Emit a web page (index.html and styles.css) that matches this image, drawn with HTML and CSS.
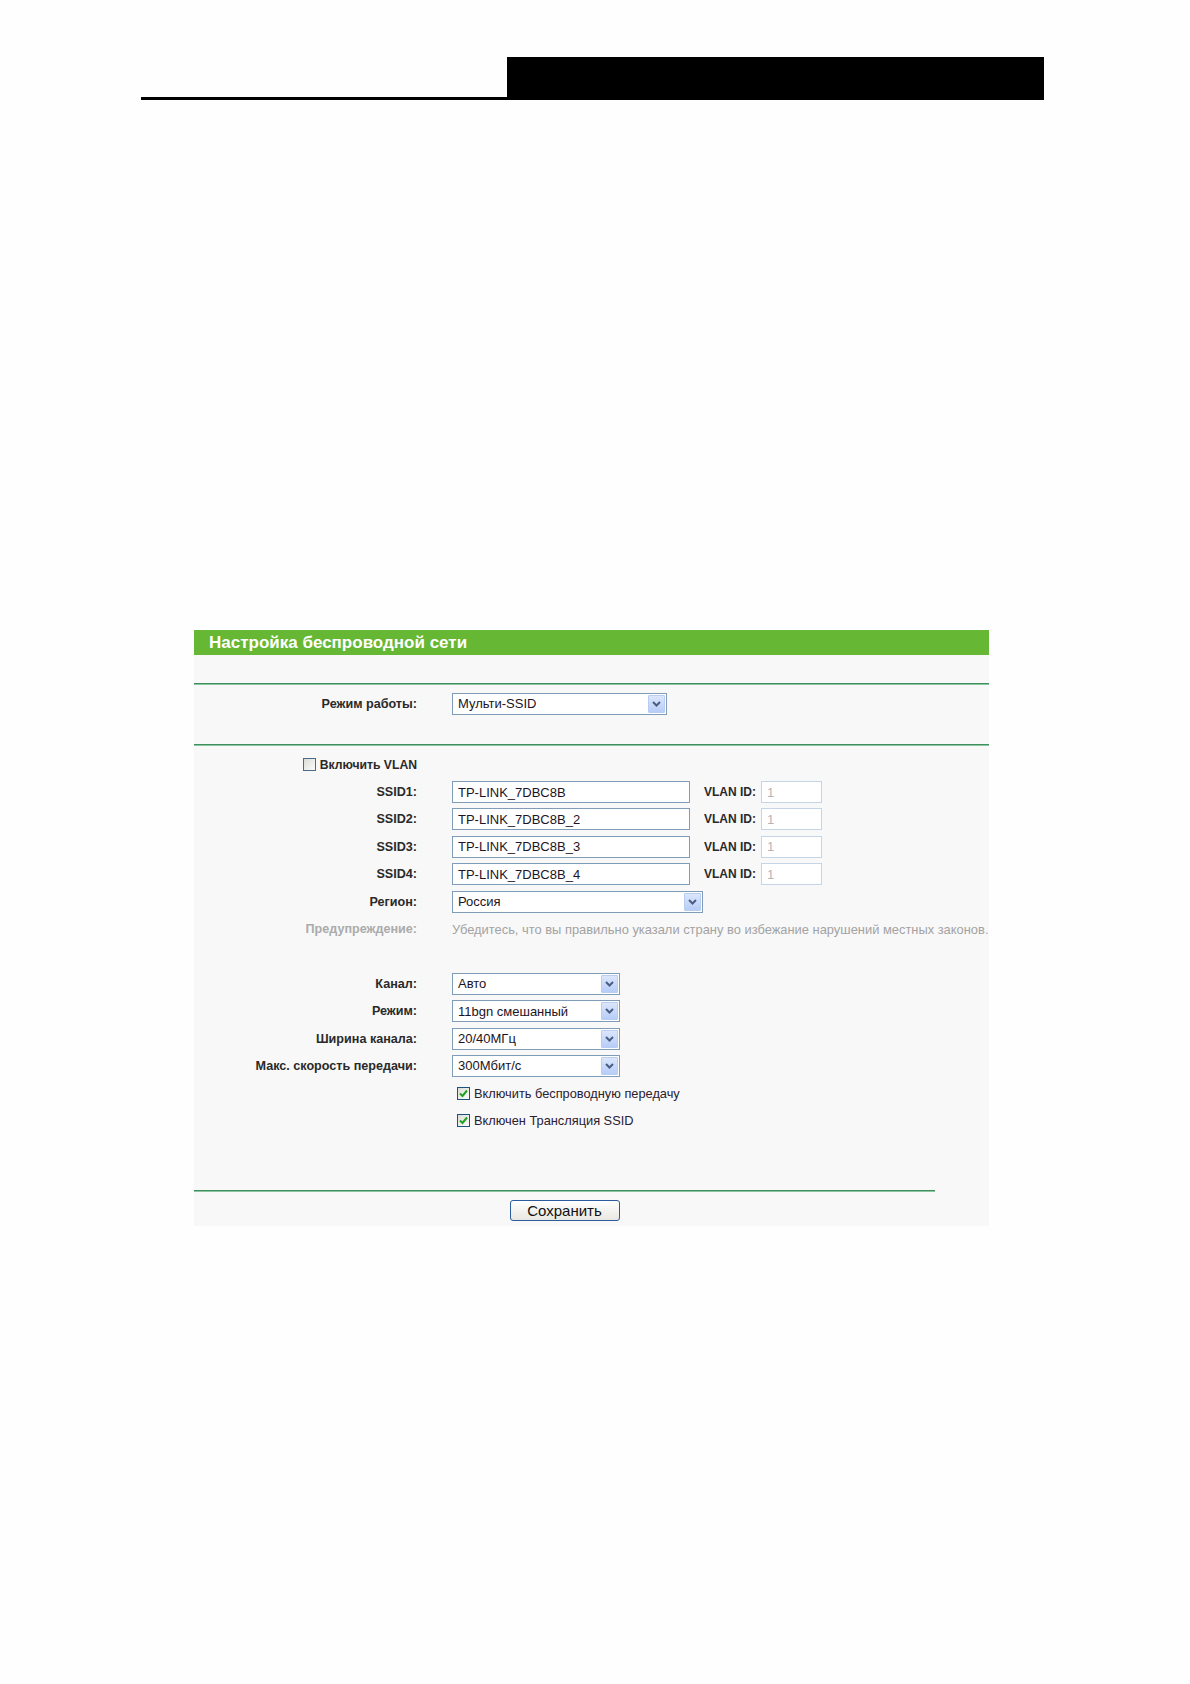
FILE: index.html
```html
<!DOCTYPE html>
<html lang="ru">
<head>
  <meta charset="UTF-8">
  <title>Настройка беспроводной сети</title>
  <link rel="stylesheet" href="styles.css">
</head>
<body>
  <div class="page">
    <div class="header">
      <div class="rule"></div>
      <div class="bar"></div>
    </div>

    <div class="panel">
      <div class="title">Настройка беспроводной сети</div>
      <div class="spacer"></div>
      <div class="divider"></div>

      <!-- Режим работы -->
      <div class="section mode">
        <div class="row">
          <div class="label">Режим работы:</div>
          <div class="field">
            <div class="select w-mode">
              <span>Мульти-SSID</span>
              <span class="arrow"><svg width="9" height="6" viewBox="0 0 9 6"><polyline points="1,1 4.5,4.5 8,1" fill="none" stroke="#4b5d84" stroke-width="2"/></svg></span>
            </div>
          </div>
        </div>
      </div>
      <div class="divider"></div>

      <div class="section main">
        <div class="row">
          <div class="label vlan-toggle">
            <span class="check"></span>Включить VLAN
          </div>
          <div class="field"></div>
        </div>

        <div class="row">
          <div class="label">SSID1:</div>
          <div class="field">
            <input class="text w-ssid" type="text" value="TP-LINK_7DBC8B">
            <span class="vlan-label">VLAN ID:</span>
            <input class="text w-vlan" type="text" value="1" disabled>
          </div>
        </div>
        <div class="row">
          <div class="label">SSID2:</div>
          <div class="field">
            <input class="text w-ssid" type="text" value="TP-LINK_7DBC8B_2">
            <span class="vlan-label">VLAN ID:</span>
            <input class="text w-vlan" type="text" value="1" disabled>
          </div>
        </div>
        <div class="row">
          <div class="label">SSID3:</div>
          <div class="field">
            <input class="text w-ssid" type="text" value="TP-LINK_7DBC8B_3">
            <span class="vlan-label">VLAN ID:</span>
            <input class="text w-vlan" type="text" value="1" disabled>
          </div>
        </div>
        <div class="row">
          <div class="label">SSID4:</div>
          <div class="field">
            <input class="text w-ssid" type="text" value="TP-LINK_7DBC8B_4">
            <span class="vlan-label">VLAN ID:</span>
            <input class="text w-vlan" type="text" value="1" disabled>
          </div>
        </div>

        <div class="row">
          <div class="label">Регион:</div>
          <div class="field">
            <div class="select w-region">
              <span>Россия</span>
              <span class="arrow"><svg width="9" height="6" viewBox="0 0 9 6"><polyline points="1,1 4.5,4.5 8,1" fill="none" stroke="#4b5d84" stroke-width="2"/></svg></span>
            </div>
          </div>
        </div>

        <div class="row warn">
          <div class="label">Предупреждение:</div>
          <div class="field">Убедитесь, что вы правильно указали страну во избежание нарушений местных законов.</div>
        </div>

        <div class="row"></div>

        <div class="row">
          <div class="label">Канал:</div>
          <div class="field">
            <div class="select w-small">
              <span>Авто</span>
              <span class="arrow"><svg width="9" height="6" viewBox="0 0 9 6"><polyline points="1,1 4.5,4.5 8,1" fill="none" stroke="#4b5d84" stroke-width="2"/></svg></span>
            </div>
          </div>
        </div>
        <div class="row">
          <div class="label">Режим:</div>
          <div class="field">
            <div class="select w-small">
              <span>11bgn смешанный</span>
              <span class="arrow"><svg width="9" height="6" viewBox="0 0 9 6"><polyline points="1,1 4.5,4.5 8,1" fill="none" stroke="#4b5d84" stroke-width="2"/></svg></span>
            </div>
          </div>
        </div>
        <div class="row">
          <div class="label">Ширина канала:</div>
          <div class="field">
            <div class="select w-small">
              <span>20/40МГц</span>
              <span class="arrow"><svg width="9" height="6" viewBox="0 0 9 6"><polyline points="1,1 4.5,4.5 8,1" fill="none" stroke="#4b5d84" stroke-width="2"/></svg></span>
            </div>
          </div>
        </div>
        <div class="row">
          <div class="label">Макс. скорость передачи:</div>
          <div class="field">
            <div class="select w-small">
              <span>300Мбит/с</span>
              <span class="arrow"><svg width="9" height="6" viewBox="0 0 9 6"><polyline points="1,1 4.5,4.5 8,1" fill="none" stroke="#4b5d84" stroke-width="2"/></svg></span>
            </div>
          </div>
        </div>

        <div class="row">
          <div class="label"></div>
          <div class="field option">
            <span class="check on"><svg width="11" height="11" viewBox="0 0 11 11"><polyline points="2,5.5 4.5,8 9,2.5" fill="none" stroke="#21a121" stroke-width="2"/></svg></span>Включить беспроводную передачу
          </div>
        </div>
        <div class="row">
          <div class="label"></div>
          <div class="field option">
            <span class="check on"><svg width="11" height="11" viewBox="0 0 11 11"><polyline points="2,5.5 4.5,8 9,2.5" fill="none" stroke="#21a121" stroke-width="2"/></svg></span>Включен Трансляция SSID
          </div>
        </div>
      </div>

      <div class="divider short"></div>
      <div class="buttons">
        <button class="btn" type="button">Сохранить</button>
      </div>
    </div>
  </div>
</body>
</html>
```
FILE: styles.css
```css
* {
  margin: 0;
  padding: 0;
  box-sizing: border-box;
}

body {
  background: #fefefe;
  font-family: 'Liberation Sans', Arial, sans-serif;
  font-size: 12px;
  color: #222;
}

.page {
  padding-top: 57px;
}

/* шапка страницы */
.header {
  display: flex;
  align-items: flex-end;
  margin-left: 141px;
  width: 903px;
}

.header .rule {
  width: 366px;
  height: 3px;
  background: #000;
}

.header .bar {
  flex: 1;
  height: 43px;
  background: #000;
}

/* панель настроек */
.panel {
  margin: 530px 0 0 194px;
  width: 795px;
  background: #f8f8f8;
  padding-bottom: 5px;
}

.title {
  height: 25px;
  line-height: 25px;
  padding-left: 15px;
  background: #66b733;
  color: #fff;
  font-size: 17px;
  font-weight: bold;
}

.spacer {
  height: 28px;
}

.divider {
  height: 2px;
  background: #3f8f5f;
  border-bottom: 1px solid #8cc4a0;
}

.divider.short {
  width: 741px;
}

.section.mode {
  height: 59px;
  padding-top: 5px;
}

.section.main {
  padding: 5px 0 56px;
}

.row {
  display: grid;
  grid-template-columns: 223px 1fr;
  column-gap: 35px;
  align-items: center;
  height: 27.4px;
}

.label {
  text-align: right;
  font-size: 12.6px;
  font-weight: bold;
  color: #2a2a2a;
  white-space: nowrap;
  display: flex;
  justify-content: flex-end;
  align-items: center;
}

.label.vlan-toggle {
  font-size: 12.2px;
}

.field {
  display: flex;
  align-items: center;
  white-space: nowrap;
}

.warn .label {
  color: #ababab;
}

.warn .field {
  font-size: 12.9px;
  color: #a3a3a3;
}

/* поля ввода */
.text {
  height: 22px;
  border: 1px solid #7f9db9;
  background: #fff;
  padding: 0 5px;
  font-family: 'Liberation Sans', Arial, sans-serif;
  font-size: 13px;
  color: #1c1424;
  outline: none;
}

.text:disabled {
  border-color: #c5d5e6;
  color: #b4b4b4;
  background: #fff;
}

.w-ssid {
  width: 238px;
}

.w-vlan {
  width: 61px;
}

.vlan-label {
  font-size: 12px;
  font-weight: bold;
  color: #2a2a2a;
  margin: 0 5px 0 14px;
}

/* выпадающие списки */
.select {
  display: flex;
  align-items: center;
  justify-content: space-between;
  height: 22px;
  border: 1px solid #7f9db9;
  background: #fff;
  padding-left: 5px;
  font-size: 13px;
  color: #1c1424;
}

.select .arrow {
  display: flex;
  align-items: center;
  justify-content: center;
  width: 17px;
  height: 18px;
  margin-right: 1px;
  border: 1px solid #b9cdf0;
  border-radius: 1px;
  background: linear-gradient(#dbe6fc, #b7cdf7);
}

.w-mode {
  width: 215px;
}

.w-region {
  width: 251px;
}

.w-small {
  width: 168px;
}

/* флажки */
.check {
  display: inline-flex;
  align-items: center;
  justify-content: center;
  width: 13px;
  height: 13px;
  border: 1px solid #1c5180;
  background: linear-gradient(135deg, #dcdcd6, #fbfbfb);
  margin-right: 4px;
}

.label .check {
  border-color: #4c6a8c;
}

.option {
  padding-left: 5px;
  font-size: 12.8px;
  color: #2a2030;
}

/* кнопка */
.buttons {
  width: 741px;
  text-align: center;
  padding-top: 8px;
}

.btn {
  width: 110px;
  height: 21px;
  border: 1px solid #2d5c9c;
  border-radius: 3px;
  background: linear-gradient(#ffffff, #e8e7e1);
  font-family: 'Liberation Sans', Arial, sans-serif;
  font-size: 15px;
  line-height: 19px;
  color: #111;
}
```
